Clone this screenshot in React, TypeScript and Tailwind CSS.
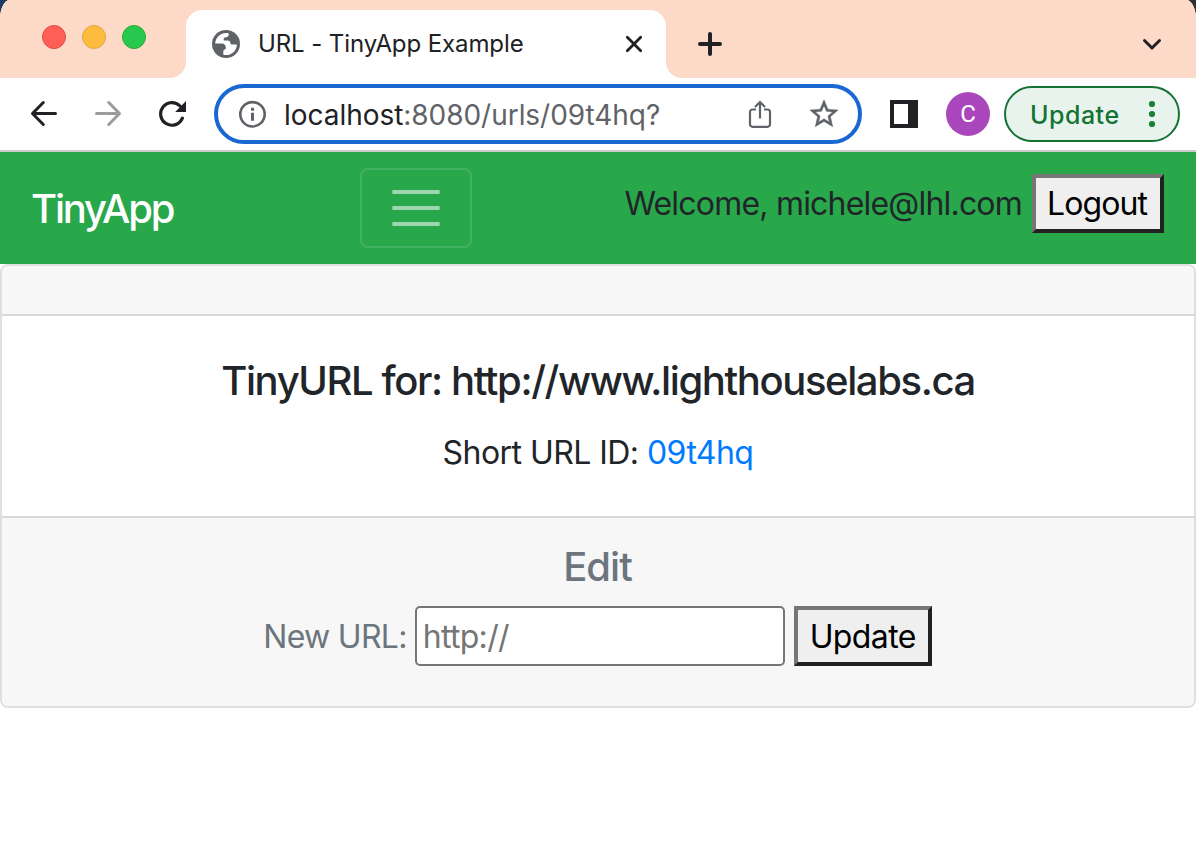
import type { ReactNode } from "react";

function TabStrip() {
  return (
    <div className="flex h-[78px] shrink-0 bg-white">
      <div className="flex w-[186px] shrink-0 gap-4 rounded-br-[16px] bg-[#fcdac7] pl-[42px] pt-[25px]">
        <span className="size-6 rounded-full border border-[#e24b41] bg-[#ff5f57]" />
        <span className="size-6 rounded-full border border-[#e1a73e] bg-[#febc3f]" />
        <span className="size-6 rounded-full border border-[#2dac2f] bg-[#28c84e]" />
      </div>
      <div className="w-[480px] shrink-0 bg-[#fcdac7] pt-[10px]">
        <div className="flex h-[68px] items-center rounded-t-[16px] bg-white pl-[26px] pr-[22px]">
          <svg className="size-7 shrink-0" viewBox="0 0 28 28">
            <circle cx="14" cy="14" r="14" fill="#5f6368" />
            <path
              d="M3.200 13.500C3.500 7.500 8.500 3 14 3c1 0 1.900.1 2.800.4C16.800 5.500 16.300 7 14 7.200c-1.600.1-2.300.6-2.300 1.800v1.600h4c1.800 0 2.600.9 2.700 2.300.1 1 .8 1.500 1.800 1.500h4.700C24.700 20.300 20 25 14 25c-1 0-1.800-.1-2.700-.3v-3.300c0-1 .5-1.600 1.400-1.900.8-.3 1.200-.7 1.200-1.500 0-2.800-1.600-4.500-4.400-4.500Z"
              fill="#fff"
            />
          </svg>
          <span className="ml-[18px] whitespace-nowrap text-[24px] tracking-[-0.1px] text-[#202124]">
            URL - TinyApp Example
          </span>
          <svg className="ml-auto size-5" viewBox="0 0 20 20" fill="none" stroke="#202124" strokeWidth="2.800" strokeLinecap="round">
            <path d="M3.300 3.300l13.400 13.400M16.700 3.300L3.300 16.700" />
          </svg>
        </div>
      </div>
      <div className="flex flex-1 items-center rounded-bl-[16px] bg-[#fcdac7] pl-[32px] pr-[32px] pt-[10px]">
        <svg className="size-6" viewBox="0 0 24 24" fill="none" stroke="#202124" strokeWidth="4" strokeLinecap="round">
          <path d="M12 2v20M2 12h20" />
        </svg>
        <svg className="ml-auto h-6 w-6" viewBox="0 0 24 24" fill="none" stroke="#202124" strokeWidth="3" strokeLinecap="round">
          <path d="M4.500 8.500l7.500 7.500 7.500-7.500" />
        </svg>
      </div>
    </div>
  );
}

function Toolbar() {
  return (
    <div className="flex h-[74px] shrink-0 items-center border-b-2 border-[#cbcbcf] bg-white pl-[30px] pr-4">
      <svg className="h-7 w-7" viewBox="0 0 28 28" fill="none" stroke="#202124" strokeWidth="3" strokeLinecap="round" strokeLinejoin="round">
        <path d="M25.500 13.500H2.500M13.300 2.500L2.500 13.500l10.800 11" />
      </svg>
      <svg className="ml-[36px] h-7 w-7" viewBox="0 0 28 28" fill="none" stroke="#9c9c9c" strokeWidth="3" strokeLinecap="round" strokeLinejoin="round">
        <path d="M2.500 13.500h23M14.700 2.500l10.800 11-10.800 11" />
      </svg>
      <svg className="ml-[36px] h-7 w-7" viewBox="0 0 28 28" fill="none">
        <path d="M24.400 18.200A11.300 11.300 0 1 1 22 6" stroke="#202124" strokeWidth="3.200" strokeLinecap="round" />
        <path d="M28 1V12H17.200Z" fill="#202124" />
      </svg>
      <div className="ml-[28px] flex h-[60px] w-[648px] shrink-0 items-center rounded-full border-4 border-[#1967d2] pl-[20px] pr-[17px]">
        <svg className="size-7 shrink-0" viewBox="0 0 28 28" fill="none">
          <circle cx="14.500" cy="14.300" r="12.200" stroke="#5f6368" strokeWidth="2.600" />
          <path d="M14.500 12.800v8M14.500 7.800v3" stroke="#5f6368" strokeWidth="3" />
        </svg>
        <span className="ml-[18px] whitespace-nowrap pt-px text-[28px] tracking-[-0.04px] text-[#5f6368]">
          <span className="text-[#202124]">localhost</span>:8080/urls/09t4hq?
        </span>
        <svg className="ml-auto h-7 w-6" viewBox="0 0 24 28" fill="none" stroke="#5f6368" strokeWidth="2.200">
          <path d="M8 9.500H4.500a2.500 2.500 0 0 0-2.500 2.500v12.300a2.500 2.500 0 0 0 2.500 2.500h15a2.500 2.500 0 0 0 2.500-2.500V12a2.500 2.500 0 0 0-2.500-2.500H16M12 18.500V2.500M7 7l5-5 5 5" />
        </svg>
        <svg className="ml-[35px] size-[34px] shrink-0" viewBox="0 0 24 24" fill="#5f6368" stroke="#5f6368" strokeWidth="0.300">
          <path d="M22 9.240l-7.190-.62L12 2 9.190 8.630 2 9.240l5.460 4.730L5.820 21 12 17.270 18.180 21l-1.630-7.030L22 9.240zM12 15.400l-3.760 2.270 1-4.280-3.320-2.880 4.380-.38L12 6.100l1.710 4.040 4.380.38-3.320 2.880 1 4.280L12 15.400z" />
        </svg>
      </div>
      <span className="ml-[28px] h-7 w-7 shrink-0 border-y-4 border-l-4 border-r-[10px] border-[#202124]" />
      <span className="ml-[28px] flex size-11 shrink-0 items-center justify-center rounded-full bg-[#ab47bc] font-['Roboto'] text-[24px] text-white">
        C
      </span>
      <div className="ml-[14px] flex h-14 w-[176px] shrink-0 items-center rounded-full border-2 border-[#137333] bg-[#e9f3ed] pl-[24px]">
        <span className="pt-[3px] text-[25px] font-[450] tracking-[0.5px] text-[#137333]">Update</span>
        <svg className="ml-auto mr-[22px] h-7 w-2" viewBox="0 0 8 28" fill="#188038">
          <circle cx="4" cy="4" r="3.100" />
          <circle cx="4" cy="14" r="3.100" />
          <circle cx="4" cy="24" r="3.100" />
        </svg>
      </div>
    </div>
  );
}

function ClassicButton({ className, children }: { className: string; children: ReactNode }) {
  return (
    <button
      className={`shrink-0 whitespace-nowrap border-4 border-t-[#767676] border-l-[#767676] border-r-[#212121] border-b-[#212121] bg-[#efefef] text-center text-[32px] leading-none text-black ${className}`}
    >
      {children}
    </button>
  );
}

function Navbar() {
  return (
    <nav className="flex h-[112px] shrink-0 bg-[#28a74b] pl-[31px] pr-8">
      <div className="flex w-[329px] items-center pt-[2px] text-[40px] font-[450] tracking-[-2.200px] text-white">TinyApp</div>
      <button className="mt-4 flex h-20 w-28 shrink-0 flex-col items-center justify-center gap-3 rounded-[8px] border-2 border-white/12">
        <span className="h-1 w-12 rounded-full bg-white/55" />
        <span className="h-1 w-12 rounded-full bg-white/55" />
        <span className="h-1 w-12 rounded-full bg-white/55" />
      </button>
      <div className="ml-auto mt-[22px] flex h-[59px] items-center">
        <span className="whitespace-nowrap pt-px text-[32px] tracking-[-0.800px] text-[#212529]">Welcome, michele@lhl.com</span>
        <ClassicButton className="ml-[10px] h-[59px] w-[132px] pr-[2px] pt-px tracking-[-0.900px]">Logout</ClassicButton>
      </div>
    </nav>
  );
}

function UrlCard() {
  return (
    <main className="flex h-[444px] shrink-0 flex-col overflow-hidden rounded-[8px] border-2 border-[#dfdfdf] bg-white text-center">
      <div className="h-[50px] shrink-0 border-b-2 border-[#d8d8d8] bg-[#f7f7f7]" />
      <div className="h-[200px] shrink-0 pt-[41px] text-[#212529]">
        <h5 className="text-[40px] font-medium leading-[48px] tracking-[-1.390px]">TinyURL for: http://www.lighthouselabs.ca</h5>
        <p className="mt-6 text-[32px] leading-[48px] tracking-[-0.550px]">
          Short URL ID: <a className="text-[#007bff]">09t4hq</a>
        </p>
      </div>
      <div className="flex-1 border-t-2 border-[#d8d8d8] bg-[#f7f7f7] pt-[25px] text-[#6c757d]">
        <h5 className="pr-px text-[40px] font-medium leading-[48px] tracking-[-1px]">Edit</h5>
        <form className="mt-[15px] flex items-center justify-center pr-px">
          <label className="pt-[2px] text-[32px] tracking-[-0.700px]">New URL:</label>
          <input
            className="ml-[8px] h-[60px] w-[370px] rounded-[5px] border-2 border-[#767676] bg-white px-[6px] pt-px text-[32px] tracking-[-0.700px] placeholder:text-[#757575]"
            placeholder="http://"
          />
          <ClassicButton className="ml-[9px] h-[60px] w-[138px] pt-[2px] tracking-[-0.600px]">Update</ClassicButton>
        </form>
      </div>
    </main>
  );
}

export default function App() {
  return (
    <div className="h-[858px] w-[1196px] overflow-hidden bg-linear-to-r from-[#1d3b60] to-[#2b2e33] to-10% font-['Inter',sans-serif]">
      <div className="flex h-full flex-col overflow-hidden bg-white [border-radius:10px_10px_0_0/20px_20px_0_0]">
        <TabStrip />
        <Toolbar />
        <Navbar />
        <UrlCard />
      </div>
    </div>
  );
}
